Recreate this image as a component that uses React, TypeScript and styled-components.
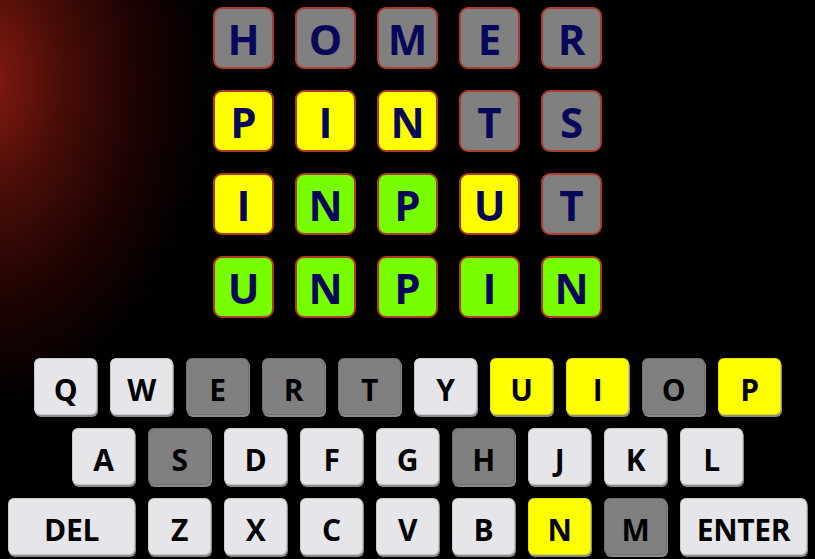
import styled, { createGlobalStyle } from 'styled-components';

type TileState = 'absent' | 'present' | 'correct';
type KeyState = 'unused' | 'absent' | 'present';

const GUESSES: { word: string; marks: TileState[] }[] = [
  { word: 'HOMER', marks: ['absent', 'absent', 'absent', 'absent', 'absent'] },
  { word: 'PINTS', marks: ['present', 'present', 'present', 'absent', 'absent'] },
  { word: 'INPUT', marks: ['present', 'correct', 'correct', 'present', 'absent'] },
  { word: 'UNPIN', marks: ['correct', 'correct', 'correct', 'correct', 'correct'] },
];

const KEY_ROWS = [
  ['Q', 'W', 'E', 'R', 'T', 'Y', 'U', 'I', 'O', 'P'],
  ['A', 'S', 'D', 'F', 'G', 'H', 'J', 'K', 'L'],
  ['DEL', 'Z', 'X', 'C', 'V', 'B', 'N', 'M', 'ENTER'],
];

const ABSENT = 'EOMRTSH';
const PRESENT = 'UIPN';

const keyState = (k: string): KeyState => {
  if (k.length > 1) return 'unused';
  if (PRESENT.includes(k)) return 'present';
  if (ABSENT.includes(k)) return 'absent';
  return 'unused';
};

const tileColors: Record<TileState, string> = {
  absent: '#808080',
  present: '#ffff00',
  correct: '#77ff00',
};

const keyColors: Record<KeyState, string> = {
  unused: '#e6e6ea',
  absent: '#808080',
  present: '#ffff00',
};

const GlobalStyle = createGlobalStyle`
  html, body {
    margin: 0;
    padding: 0;
    height: 100%;
    background: #000;
  }
  #root {
    height: 100%;
  }
`;

function App() {
  return (
    <>
      <GlobalStyle />
      <Page>
        <Board>
          {GUESSES.map((g, r) =>
            g.word.split('').map((ch, c) => (
              <Tile key={`${r}-${c}`} $state={g.marks[c]}>
                {ch}
              </Tile>
            ))
          )}
        </Board>
        <Keyboard>
          {KEY_ROWS.map((row, i) => (
            <KeyRow key={i}>
              {row.map((k) => (
                <Key key={k} $state={keyState(k)} $wide={k.length > 1}>
                  {k}
                </Key>
              ))}
            </KeyRow>
          ))}
        </Keyboard>
      </Page>
    </>
  );
}

export default App;

const Page = styled.div`
  width: 100%;
  height: 100%;
  min-height: 559px;
  box-sizing: border-box;
  padding-top: 7px;
  display: flex;
  flex-direction: column;
  align-items: center;
  background: radial-gradient(ellipse 230px 330px at -20px 80px, #8a1c12 0%, #4a0d08 35%, #1a0302 70%, #000 100%);
  font-family: 'Open Sans', 'Noto Sans', sans-serif;
  overflow: hidden;
`;

const Board = styled.div`
  display: grid;
  grid-template-columns: repeat(5, 61px);
  grid-auto-rows: 62px;
  column-gap: 21px;
  row-gap: 21px;
`;

const Tile = styled.div<{ $state: TileState }>`
  box-sizing: border-box;
  display: flex;
  align-items: center;
  justify-content: center;
  background: ${(p) => tileColors[p.$state]};
  border: 2px solid #ad3b2c;
  border-radius: 9px;
  color: #08085a;
  font-weight: 700;
  font-size: 42px;
  line-height: 1;
  padding-top: 2px;
`;

const Keyboard = styled.div`
  margin-top: 40px;
  display: flex;
  flex-direction: column;
  align-items: center;
  gap: 13px;
`;

const KeyRow = styled.div`
  display: flex;
  gap: 13px;
`;

const Key = styled.div<{ $state: KeyState; $wide: boolean }>`
  box-sizing: border-box;
  width: ${(p) => (p.$wide ? '127px' : '63px')};
  height: 57px;
  display: flex;
  align-items: center;
  justify-content: center;
  padding-top: 6px;
  background: ${(p) => keyColors[p.$state]};
  border-radius: 6px;
  box-shadow: inset 0 0 0 1px rgba(0, 0, 0, 0.12), 1px 2px 0 #8a8a8a;
  color: #000;
  font-weight: 700;
  font-size: 30px;
  letter-spacing: -0.3px;
`;
